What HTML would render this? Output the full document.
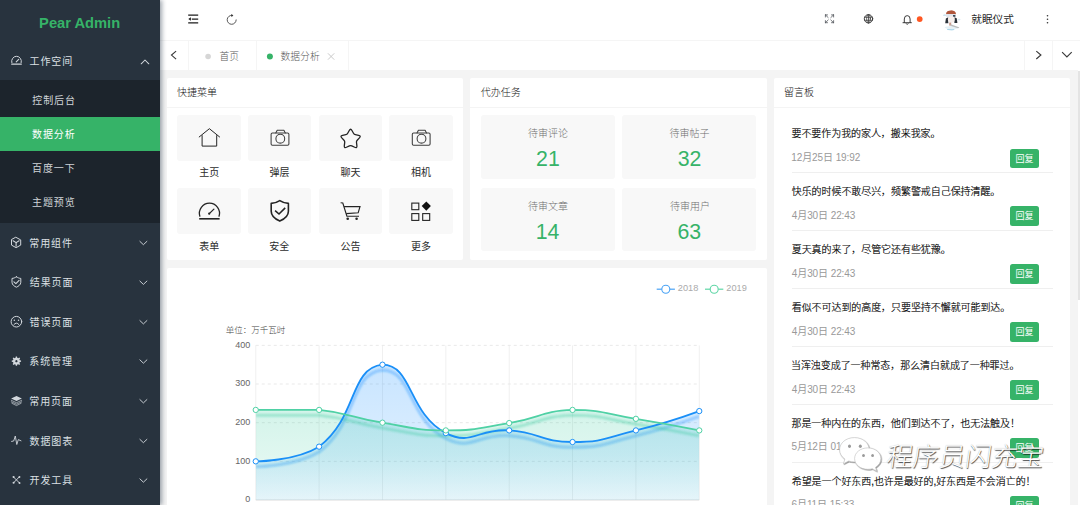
<!DOCTYPE html>
<html lang="zh-CN">
<head>
<meta charset="utf-8">
<title>Pear Admin</title>
<style>
*{box-sizing:border-box;margin:0;padding:0}
html,body{width:1080px;height:505px;overflow:hidden;background:#f4f4f4;font-family:"Liberation Sans","Noto Sans CJK SC",sans-serif;color:#333}
.t{position:absolute;white-space:nowrap;line-height:1}
.b{position:absolute}
.side{left:0;top:0;width:160px;height:505px;background:#28333e;box-shadow:1.5px 0 4.5px rgba(0,21,41,.38)}
.sub{left:0;top:80px;width:160px;height:143px;background:#1c242c}
.on{left:0;top:117px;width:160px;height:34px;background:#36b368}
.hdr{left:160px;top:0;width:920px;height:40px;background:#fff}
.tabs{left:160px;top:40px;width:920px;height:30px;background:#fff;border-top:1px solid #f5f5f5}
.vd{top:41px;width:1px;height:29px;background:#f5f5f5}
.card{background:#fff;border-radius:2px}
.cl{height:1px;background:#f4f4f4}
.qb{width:63.4px;height:46.3px;background:#f8f8f8;border-radius:3px}
.tk{width:134px;height:63px;background:#f8f8f8;border-radius:3px}
.btn{left:1010.3px;width:28.5px;height:19.65px;background:#36b368;border-radius:2.5px}
.ln{left:792px;width:260.7px;height:1px;background:#efefef}
svg{position:absolute;left:0;top:0;overflow:visible;pointer-events:none}
ul,li{list-style:none}
h3{font-weight:normal;font-size:inherit}
</style>
</head>
<body>
<header>
<div class="b hdr"></div>
<span class="t" style="left:971.20px;top:14.00px;font-size:10.7px;color:#2a2a2a;">就眠仪式</span>
<nav>
<div class="b tabs"></div>
<div class="b vd" style="left:188px"></div>
<div class="b vd" style="left:256px"></div>
<div class="b vd" style="left:348px"></div>
<div class="b vd" style="left:1024.2px"></div>
<div class="b vd" style="left:1051.8px"></div>
<span class="t" style="left:219.60px;top:52.30px;font-size:9.7px;color:#5a5a5a;font-weight:300;">首页</span>
<span class="t" style="left:280.50px;top:51.85px;font-size:9.8px;color:#5a5a5a;font-weight:300;">数据分析</span>
</nav>
<svg width="1080" height="505" viewBox="0 0 1080 505" fill="none" stroke-linecap="round" stroke-linejoin="round">
<g stroke="#1c1c1c" stroke-width="1.25" stroke-linecap="butt">
<path d="M188.2,15.1 H198.2 M191.8,19 H198.2 M188.2,22.9 H198.2"/>
</g>
<path d="M190.9,17.2 L188.3,19 L190.9,20.8 Z" fill="#1c1c1c" stroke="none"/>
<path d="M236.2,19.9 A4.5,4.5 0 1 1 232,15.3" stroke="#444" stroke-width=".9"/>
<path d="M231.2,13.9 L233.4,15.4 L231.4,16.9 Z" fill="#333" stroke="none"/>
<g stroke="#3a3a3a" stroke-width="1.15" stroke-linecap="butt" stroke-linejoin="miter"><path d="M176.1,51.1 L171.5,55.1 L176.1,59.1"/><path d="M1036.3,51.1 L1040.9,55.05 L1036.3,59"/><path d="M1062.1,52.2 L1066.9,57 L1071.7,52.2"/></g>
<circle cx="208.1" cy="56.5" r="2.8" fill="#d6d6d6" stroke="none"/><circle cx="269.9" cy="56.4" r="3" fill="#36b368" stroke="none"/>
<path d="M328.2,53.6 L334,59.4 M334,53.6 L328.2,59.4" stroke="#c4c4c4" stroke-width=".9"/>
<g stroke="#5c6066" stroke-width=".85">
<path d="M828.2,17.6 L825.4,14.9 M825.4,14.9 H827.5 M825.4,14.9 V17.0"/>
<path d="M830.8,17.6 L833.6,14.9 M833.6,14.9 H831.5 M833.6,14.9 V17.0"/>
<path d="M828.2,20.0 L825.4,22.7 M825.4,22.7 H827.5 M825.4,22.7 V20.6"/>
<path d="M830.8,20.0 L833.6,22.7 M833.6,22.7 H831.5 M833.6,22.7 V20.6"/>
</g>
<g stroke="#3c3c3c" stroke-width=".8"><circle cx="868.5" cy="18.8" r="4.2" stroke-width="1"/><ellipse cx="868.5" cy="18.8" rx="1.9" ry="4.2"/><path d="M864.6,17.3 H872.4 M864.6,20.3 H872.4 M868.5,14.7 V22.9"/></g>
<path d="M903,22.7 H911.4 M904.3,22.6 V19 A2.9,3.4 0 0 1 910.1,19 V22.6" stroke="#333" stroke-width=".95"/>
<path d="M906.2,23.7 A1.1,1.1 0 0 0 908.2,23.7" stroke="#333" stroke-width=".9"/>
<circle cx="919.7" cy="19.1" r="2.9" fill="#ff5722" stroke="none"/>
<g fill="#333" stroke="none"><circle cx="1047.5" cy="15.8" r=".8"/><circle cx="1047.5" cy="19.2" r=".8"/><circle cx="1047.5" cy="22.7" r=".8"/></g>
<defs><clipPath id="av"><circle cx="951.8" cy="20.4" r="10.4"/></clipPath><filter id="avb" x="-20%" y="-20%" width="140%" height="140%"><feGaussianBlur stdDeviation=".35"/></filter></defs>
<g clip-path="url(#av)" stroke="none" filter="url(#avb)">
<ellipse cx="950.6" cy="29.4" rx="3.8" ry="1" fill="#a9d5e9"/>
<ellipse cx="952" cy="27.6" rx="7.5" ry="1.6" fill="#e6f1f6"/>
<ellipse cx="944.6" cy="15.2" rx="1.6" ry=".9" fill="#cfe6f1"/>
<ellipse cx="959" cy="19.6" rx="1.5" ry=".8" fill="#d5e9f3"/>
<path d="M945.2,23.2 L945.9,18.4 L948.3,17.2 L948.3,23.2 Z" fill="#2c3038"/>
<path d="M957.4,23 L956.7,18.2 L954.4,17.2 L954.4,23 Z" fill="#2c3038"/>
<path d="M946,14.2 A5,4 0 0 1 956,14.2 Z" fill="#b0563a"/>
<rect x="946" y="14.1" width="9.6" height="2.9" rx="1.2" fill="#dfe5ec"/>
<rect x="953" y="15" width="2.4" height="1.8" fill="#3a4654"/>
<ellipse cx="951.3" cy="19.6" rx="3.4" ry="3.3" fill="#f7efec"/>
<rect x="949.2" y="22.6" width="2" height="3" fill="#c99a8a"/>
<path d="M950.8,24.2 L959.4,27.4 L958.8,28.4 L950.4,25.8 Z" fill="#bdbdbd"/>
</g>
</svg>
</header>
<main>
<section>
<div class="b card" style="left:167px;top:78px;width:296px;height:182px"></div>
<div class="b cl" style="left:167px;top:107px;width:296px"></div>
<h3><span class="t" style="left:177.00px;top:87.70px;font-size:10px;color:#151515;font-weight:300;">快捷菜单</span></h3>
<div class="b qb" style="left:177.4px;top:115px"></div><span class="t" style="left:199.25px;top:168.05px;font-size:10px;color:#2c2c2c;">主页</span>
<div class="b qb" style="left:248.1px;top:115px"></div><span class="t" style="left:269.60px;top:168.05px;font-size:10px;color:#2c2c2c;">弹层</span>
<div class="b qb" style="left:318.7px;top:115px"></div><span class="t" style="left:340.40px;top:168.05px;font-size:10px;color:#2c2c2c;">聊天</span>
<div class="b qb" style="left:389.2px;top:115px"></div><span class="t" style="left:410.90px;top:168.05px;font-size:10px;color:#2c2c2c;">相机</span>
<div class="b qb" style="left:177.4px;top:188px"></div><span class="t" style="left:199.25px;top:242.00px;font-size:10px;color:#2c2c2c;">表单</span>
<div class="b qb" style="left:248.1px;top:188px"></div><span class="t" style="left:269.35px;top:242.00px;font-size:10px;color:#2c2c2c;">安全</span>
<div class="b qb" style="left:318.7px;top:188px"></div><span class="t" style="left:340.40px;top:242.00px;font-size:10px;color:#2c2c2c;">公告</span>
<div class="b qb" style="left:389.2px;top:188px"></div><span class="t" style="left:410.90px;top:242.00px;font-size:10px;color:#2c2c2c;">更多</span>
<svg width="1080" height="505" viewBox="0 0 1080 505" fill="none" stroke-linecap="round" stroke-linejoin="round">
<g stroke="#242424" stroke-width="1" stroke-linecap="butt" stroke-linejoin="miter">
<path d="M198.9,137.2 L209.4,128.7 L219.9,137.2"/><path d="M202.1,135.2 V146.1 H216.7 V135.2"/>
</g>
<g stroke="#3c3c3c" stroke-width="1.05" transform="translate(0,0)"><rect x="271.1" y="132.9" width="17.8" height="12.4" rx="1.3"/><path d="M275.8,132.9 L277.2,130.2 H283.9 L285.3,132.9"/><circle cx="280.3" cy="138.7" r="4.4"/></g>
<g stroke="#3c3c3c" stroke-width="1.05" transform="translate(141.2,0)"><rect x="271.1" y="132.9" width="17.8" height="12.4" rx="1.3"/><path d="M275.8,132.9 L277.2,130.2 H283.9 L285.3,132.9"/><circle cx="280.3" cy="138.7" r="4.4"/></g>
<path d="M349.26,130.46 Q350.60,128.00 351.94,130.46 L353.50,133.31 Q354.13,134.45 355.40,134.69 L358.60,135.29 Q361.35,135.81 359.43,137.85 L357.20,140.21 Q356.31,141.15 356.47,142.44 L356.89,145.66 Q357.24,148.44 354.71,147.24 L351.78,145.86 Q350.60,145.30 349.42,145.86 L346.49,147.24 Q343.96,148.44 344.31,145.66 L344.73,142.44 Q344.89,141.15 344.00,140.21 L341.77,137.85 Q339.85,135.81 342.60,135.29 L345.80,134.69 Q347.07,134.45 347.70,133.31 Z" stroke="#242424" stroke-width="1.3" stroke-linejoin="round"/>
<g stroke="#242424"><path d="M199.85,216.2 A10.05,10.05 0 1 1 219.05,216.2" stroke-width="1.3"/><path d="M199.2,218.8 H219.6" stroke-width="1.6" stroke-linecap="butt"/><path d="M209.3,213.6 L213.9,209.1" stroke-width="1.3"/></g><circle cx="209.2" cy="213.7" r="1.1" fill="#242424" stroke="none"/>
<path d="M279.8,200.60000000000002 C276.8,202.5 273.8,203.4 271.2,203.4 V211.3 C271.2,216.3 275.8,219.4 279.8,221.10000000000002 C283.8,219.4 288.40000000000003,216.3 288.40000000000003,211.3 V203.4 C285.8,203.4 282.8,202.5 279.8,200.60000000000002 Z" stroke="#242424" stroke-width="1.6"/>
<path d="M275.1,210.6 L279,214 L285.2,207.9" stroke="#242424" stroke-width="1.55" stroke-linecap="butt" stroke-linejoin="miter"/>
<g stroke="#242424" stroke-width="1.15" stroke-linecap="butt" stroke-linejoin="miter"><path d="M340.6,202.7 L342.8,203 L346.9,216.2 H359"/><path d="M344.1,206.6 H360 L358.2,212.7 L346.2,213.6"/></g>
<circle cx="347.7" cy="218.8" r="1.3" fill="#242424" stroke="none"/><circle cx="356.6" cy="218.8" r="1.3" fill="#242424" stroke="none"/>
<g stroke="#242424" stroke-width="1.1" stroke-linejoin="miter"><rect x="411.8" y="203.1" width="7" height="6.6"/><rect x="411.8" y="213.6" width="7" height="6.8"/><rect x="422.7" y="213.6" width="7" height="6.8"/></g>
<path d="M426.3,201.5 L430.9,206.1 L426.3,210.7 L421.7,206.1 Z" fill="#111" stroke="none"/>
</svg>
</section>
<section>
<div class="b card" style="left:470px;top:78px;width:297px;height:182px"></div>
<div class="b cl" style="left:470px;top:107px;width:297px"></div>
<h3><span class="t" style="left:480.75px;top:87.70px;font-size:10px;color:#151515;font-weight:300;">代办任务</span></h3>
<div class="b tk" style="left:481px;top:115px;height:63.5px;"></div><span class="t" style="left:528.00px;top:129.15px;font-size:10px;color:#6f6f6f;font-weight:300;">待审评论</span><span class="t" style="left:536.12px;top:149.00px;font-size:21.3px;color:#36b368;">21</span>
<div class="b tk" style="left:622.4px;top:115px;height:63.5px;"></div><span class="t" style="left:669.40px;top:129.15px;font-size:10px;color:#6f6f6f;font-weight:300;">待审帖子</span><span class="t" style="left:677.65px;top:149.00px;font-size:21.3px;color:#36b368;">32</span>
<div class="b tk" style="left:481px;top:188px;height:62.6px;"></div><span class="t" style="left:528.00px;top:201.75px;font-size:10px;color:#6f6f6f;font-weight:300;">待审文章</span><span class="t" style="left:535.75px;top:221.60px;font-size:21.3px;color:#36b368;">14</span>
<div class="b tk" style="left:622.4px;top:188px;height:62.6px;"></div><span class="t" style="left:669.90px;top:201.75px;font-size:10px;color:#6f6f6f;font-weight:300;">待审用户</span><span class="t" style="left:677.52px;top:221.60px;font-size:21.3px;color:#36b368;">63</span>
</section>
<section>
<div class="b card" style="left:774px;top:78px;width:296px;height:440px"></div>
<div class="b cl" style="left:774px;top:107px;width:296px"></div>
<h3><span class="t" style="left:784.00px;top:87.70px;font-size:10px;color:#151515;font-weight:300;">留言板</span></h3>
<ul>
<li><span class="t" style="left:791.50px;top:129.00px;font-size:10px;color:#000;font-weight:300;-webkit-text-stroke:.18px #000;letter-spacing:-.07px;">要不要作为我的家人，搬来我家。</span><span class="t" style="left:791.25px;top:152.80px;font-size:10px;color:#999;letter-spacing:-.09px;">12月25日 19:92</span><div class="b btn" style="top:148.55px"></div><span class="t" style="left:1015.58px;top:154.50px;font-size:9px;color:#fff;">回复</span><div class="b ln" style="top:171.90px"></div></li>
<li><span class="t" style="left:791.75px;top:186.93px;font-size:10px;color:#000;font-weight:300;-webkit-text-stroke:.18px #000;letter-spacing:-.07px;">快乐的时候不敢尽兴，频繁警戒自己保持清醒。</span><span class="t" style="left:791.75px;top:210.73px;font-size:10px;color:#999;letter-spacing:-.09px;">4月30日 22:43</span><div class="b btn" style="top:206.48px"></div><span class="t" style="left:1015.58px;top:212.43px;font-size:9px;color:#fff;">回复</span><div class="b ln" style="top:229.83px"></div></li>
<li><span class="t" style="left:791.75px;top:244.86px;font-size:10px;color:#000;font-weight:300;-webkit-text-stroke:.18px #000;letter-spacing:-.07px;">夏天真的来了，尽管它还有些犹豫。</span><span class="t" style="left:791.75px;top:268.66px;font-size:10px;color:#999;letter-spacing:-.09px;">4月30日 22:43</span><div class="b btn" style="top:264.41px"></div><span class="t" style="left:1015.58px;top:270.36px;font-size:9px;color:#fff;">回复</span><div class="b ln" style="top:287.76px"></div></li>
<li><span class="t" style="left:791.75px;top:302.79px;font-size:10px;color:#000;font-weight:300;-webkit-text-stroke:.18px #000;letter-spacing:-.07px;">看似不可达到的高度，只要坚持不懈就可能到达。</span><span class="t" style="left:791.75px;top:326.59px;font-size:10px;color:#999;letter-spacing:-.09px;">4月30日 22:43</span><div class="b btn" style="top:322.34px"></div><span class="t" style="left:1015.58px;top:328.29px;font-size:9px;color:#fff;">回复</span><div class="b ln" style="top:345.69px"></div></li>
<li><span class="t" style="left:791.00px;top:360.72px;font-size:10px;color:#000;font-weight:300;-webkit-text-stroke:.18px #000;letter-spacing:-.07px;">当浑浊变成了一种常态，那么清白就成了一种罪过。</span><span class="t" style="left:791.75px;top:384.52px;font-size:10px;color:#999;letter-spacing:-.09px;">4月30日 22:43</span><div class="b btn" style="top:380.27px"></div><span class="t" style="left:1015.58px;top:386.22px;font-size:9px;color:#fff;">回复</span><div class="b ln" style="top:403.62px"></div></li>
<li><span class="t" style="left:791.50px;top:418.65px;font-size:10px;color:#000;font-weight:300;-webkit-text-stroke:.18px #000;letter-spacing:-.07px;">那是一种内在的东西，他们到达不了，也无法触及！</span><span class="t" style="left:791.50px;top:442.45px;font-size:10px;color:#999;letter-spacing:-.09px;">5月12日 01:25</span><div class="b btn" style="top:438.20px"></div><span class="t" style="left:1015.58px;top:444.15px;font-size:9px;color:#fff;">回复</span><div class="b ln" style="top:461.55px"></div></li>
<li><span class="t" style="left:791.75px;top:476.58px;font-size:10px;color:#000;font-weight:300;-webkit-text-stroke:.18px #000;letter-spacing:-.07px;">希望是一个好东西,也许是最好的,好东西是不会消亡的！</span><span class="t" style="left:791.50px;top:500.38px;font-size:10px;color:#999;letter-spacing:-.09px;">6月11日 15:33</span><div class="b btn" style="top:496.13px"></div><span class="t" style="left:1015.58px;top:502.08px;font-size:9px;color:#fff;">回复</span></li>
</ul>
</section>
<section>
<div class="b card" style="left:167px;top:268px;width:600px;height:250px"></div>
<svg width="1080" height="505" viewBox="0 0 1080 505">
<defs><linearGradient id="gb" gradientUnits="userSpaceOnUse" x1="0" y1="364" x2="0" y2="500"><stop offset="0" stop-color="#1890ff" stop-opacity=".24"/><stop offset=".67" stop-color="#1890ff" stop-opacity=".15"/><stop offset="1" stop-color="#1890ff" stop-opacity=".07"/></linearGradient><linearGradient id="gg" gradientUnits="userSpaceOnUse" x1="0" y1="410" x2="0" y2="500"><stop offset="0" stop-color="#2fc99a" stop-opacity=".21"/><stop offset=".5" stop-color="#2fc99a" stop-opacity=".15"/><stop offset="1" stop-color="#2fc99a" stop-opacity=".05"/></linearGradient><filter id="sb" x="-5%" y="-40%" width="110%" height="200%"><feGaussianBlur stdDeviation="1.1"/></filter><clipPath id="cc"><rect x="255.75" y="330" width="443.52" height="170.0"/></clipPath></defs>
<line x1="255.75" y1="345.36" x2="255.75" y2="500.00" stroke="#f0f0f0" stroke-width="1"/>
<line x1="319.11" y1="345.36" x2="319.11" y2="500.00" stroke="#f0f0f0" stroke-width="1"/>
<line x1="382.47" y1="345.36" x2="382.47" y2="500.00" stroke="#f0f0f0" stroke-width="1"/>
<line x1="445.83" y1="345.36" x2="445.83" y2="500.00" stroke="#f0f0f0" stroke-width="1"/>
<line x1="509.19" y1="345.36" x2="509.19" y2="500.00" stroke="#f0f0f0" stroke-width="1"/>
<line x1="572.55" y1="345.36" x2="572.55" y2="500.00" stroke="#f0f0f0" stroke-width="1"/>
<line x1="635.91" y1="345.36" x2="635.91" y2="500.00" stroke="#f0f0f0" stroke-width="1"/>
<line x1="699.27" y1="345.36" x2="699.27" y2="500.00" stroke="#f0f0f0" stroke-width="1"/>
<line x1="255.75" y1="461.34" x2="699.27" y2="461.34" stroke="#e9e9e9" stroke-width="1" stroke-dasharray="3 3"/>
<line x1="255.75" y1="422.68" x2="699.27" y2="422.68" stroke="#e9e9e9" stroke-width="1" stroke-dasharray="3 3"/>
<line x1="255.75" y1="384.02" x2="699.27" y2="384.02" stroke="#e9e9e9" stroke-width="1" stroke-dasharray="3 3"/>
<line x1="255.75" y1="345.36" x2="699.27" y2="345.36" stroke="#e9e9e9" stroke-width="1" stroke-dasharray="3 3"/>
<line x1="255.75" y1="500.00" x2="699.27" y2="500.00" stroke="#dcdcdc" stroke-width="1"/>
<g clip-path="url(#cc)">
<path d="M255.75,461.34 C255.75,461.34 294.67,461.34 319.11,446.65 C358.03,416.96 349.13,368.25 382.47,364.69 C412.49,364.69 408.12,413.56 445.83,433.12 C471.48,446.42 477.76,428.21 509.19,430.41 C541.12,432.65 540.87,442.01 572.55,442.01 C604.23,442.01 604.67,438.04 635.91,430.41 C668.03,422.57 699.27,411.08 699.27,411.08 L699.27,510.00 L255.75,510.00 Z" fill="url(#gb)"/>
<path d="M255.75,461.34 C255.75,461.34 294.67,461.34 319.11,446.65 C358.03,416.96 349.13,368.25 382.47,364.69 C412.49,364.69 408.12,413.56 445.83,433.12 C471.48,446.42 477.76,428.21 509.19,430.41 C541.12,432.65 540.87,442.01 572.55,442.01 C604.23,442.01 604.67,438.04 635.91,430.41 C668.03,422.57 699.27,411.08 699.27,411.08" transform="translate(0,5.3)" fill="none" stroke="#1890ff" stroke-opacity=".42" stroke-width="2.6" filter="url(#sb)"/>
<path d="M255.75,409.92 C255.75,409.92 287.74,409.92 319.11,409.92 C351.10,413.14 350.59,417.53 382.47,422.68 C413.95,427.77 414.14,430.32 445.83,430.41 C477.50,430.41 477.74,428.15 509.19,423.07 C541.10,417.91 540.69,410.99 572.55,409.92 C604.05,409.92 604.34,413.71 635.91,418.81 C667.70,423.95 699.27,430.41 699.27,430.41 L699.27,510.00 L255.75,510.00 Z" fill="url(#gg)"/>
<path d="M255.75,409.92 C255.75,409.92 287.74,409.92 319.11,409.92 C351.10,413.14 350.59,417.53 382.47,422.68 C413.95,427.77 414.14,430.32 445.83,430.41 C477.50,430.41 477.74,428.15 509.19,423.07 C541.10,417.91 540.69,410.99 572.55,409.92 C604.05,409.92 604.34,413.71 635.91,418.81 C667.70,423.95 699.27,430.41 699.27,430.41" transform="translate(0,5.3)" fill="none" stroke="#2fc99a" stroke-opacity=".4" stroke-width="2.6" filter="url(#sb)"/>
</g>
<path d="M255.75,461.34 C255.75,461.34 294.67,461.34 319.11,446.65 C358.03,416.96 349.13,368.25 382.47,364.69 C412.49,364.69 408.12,413.56 445.83,433.12 C471.48,446.42 477.76,428.21 509.19,430.41 C541.12,432.65 540.87,442.01 572.55,442.01 C604.23,442.01 604.67,438.04 635.91,430.41 C668.03,422.57 699.27,411.08 699.27,411.08" fill="none" stroke="#1a8ff7" stroke-width="1.8"/>
<path d="M255.75,409.92 C255.75,409.92 287.74,409.92 319.11,409.92 C351.10,413.14 350.59,417.53 382.47,422.68 C413.95,427.77 414.14,430.32 445.83,430.41 C477.50,430.41 477.74,428.15 509.19,423.07 C541.10,417.91 540.69,410.99 572.55,409.92 C604.05,409.92 604.34,413.71 635.91,418.81 C667.70,423.95 699.27,430.41 699.27,430.41" fill="none" stroke="#4fd1a5" stroke-width="1.8"/>
<circle cx="255.75" cy="461.34" r="2.65" fill="#fff" stroke="#1a8ff7" stroke-width="1"/>
<circle cx="319.11" cy="446.65" r="2.65" fill="#fff" stroke="#1a8ff7" stroke-width="1"/>
<circle cx="382.47" cy="364.69" r="2.65" fill="#fff" stroke="#1a8ff7" stroke-width="1"/>
<circle cx="445.83" cy="433.12" r="2.65" fill="#fff" stroke="#1a8ff7" stroke-width="1"/>
<circle cx="509.19" cy="430.41" r="2.65" fill="#fff" stroke="#1a8ff7" stroke-width="1"/>
<circle cx="572.55" cy="442.01" r="2.65" fill="#fff" stroke="#1a8ff7" stroke-width="1"/>
<circle cx="635.91" cy="430.41" r="2.65" fill="#fff" stroke="#1a8ff7" stroke-width="1"/>
<circle cx="699.27" cy="411.08" r="2.65" fill="#fff" stroke="#1a8ff7" stroke-width="1"/>
<circle cx="255.75" cy="409.92" r="2.65" fill="#fff" stroke="#4fd1a5" stroke-width="1"/>
<circle cx="319.11" cy="409.92" r="2.65" fill="#fff" stroke="#4fd1a5" stroke-width="1"/>
<circle cx="382.47" cy="422.68" r="2.65" fill="#fff" stroke="#4fd1a5" stroke-width="1"/>
<circle cx="445.83" cy="430.41" r="2.65" fill="#fff" stroke="#4fd1a5" stroke-width="1"/>
<circle cx="509.19" cy="423.07" r="2.65" fill="#fff" stroke="#4fd1a5" stroke-width="1"/>
<circle cx="572.55" cy="409.92" r="2.65" fill="#fff" stroke="#4fd1a5" stroke-width="1"/>
<circle cx="635.91" cy="418.81" r="2.65" fill="#fff" stroke="#4fd1a5" stroke-width="1"/>
<circle cx="699.27" cy="430.41" r="2.65" fill="#fff" stroke="#4fd1a5" stroke-width="1"/>
<line x1="656.7" y1="289.2" x2="674.9" y2="289.2" stroke="#4aa3f5" stroke-width="1.2"/><circle cx="665.8" cy="289.2" r="4" fill="#fff" stroke="#4aa3f5" stroke-width="1.1"/>
<line x1="705" y1="289.2" x2="723.3" y2="289.2" stroke="#5fd6a6" stroke-width="1.2"/><circle cx="714.2" cy="289.2" r="4" fill="#fff" stroke="#5fd6a6" stroke-width="1.1"/>
</svg>
<span class="t" style="left:225.80px;top:326.00px;font-size:8.5px;color:#444;font-weight:300;">单位：万千瓦时</span>
<span class="t" style="left:245.25px;top:495.45px;font-size:9px;color:#666;">0</span>
<span class="t" style="left:235.25px;top:456.79px;font-size:9px;color:#666;">100</span>
<span class="t" style="left:235.25px;top:418.13px;font-size:9px;color:#666;">200</span>
<span class="t" style="left:235.25px;top:379.47px;font-size:9px;color:#666;">300</span>
<span class="t" style="left:235.25px;top:340.81px;font-size:9px;color:#666;">400</span>
<span class="t" style="left:677.80px;top:283.90px;font-size:9.2px;color:#aaa;">2018</span>
<span class="t" style="left:726.30px;top:283.90px;font-size:9.2px;color:#aaa;">2019</span>
</section>
<div class="wm">
<svg width="1080" height="505" viewBox="0 0 1080 505"><defs><filter id="ws" x="-20%" y="-20%" width="140%" height="140%"><feDropShadow dx=".7" dy=".8" stdDeviation=".5" flood-color="#000" flood-opacity=".55"/></filter></defs><g filter="url(#ws)" fill="#fff" stroke="#b0b0b0" stroke-width=".5"><path d="M854.4,437.6 C846,437.6 839.6,443 839.6,449.8 C839.6,453.6 841.7,456.9 844.9,459.1 L843.4,463.8 L848.7,461 C850.5,461.6 852.4,461.9 854.4,461.9 C862.8,461.9 869.2,456.6 869.2,449.8 C869.2,443 862.8,437.6 854.4,437.6 Z"/><path d="M867.8,447.9 C860.4,447.9 854.6,452.6 854.6,458.6 C854.6,464.6 860.4,469.3 867.8,469.3 C869.4,469.3 870.9,469.1 872.3,468.7 L876.6,471.2 L875.5,467.3 C878.8,465.3 880.9,462.2 880.9,458.6 C880.9,452.6 875.2,447.9 867.8,447.9 Z"/></g><g fill="#9a9a9a"><ellipse cx="849.5" cy="446.3" rx="1.5" ry="1.7"/><ellipse cx="860.3" cy="446.3" rx="1.5" ry="1.7"/><ellipse cx="863.5" cy="455.6" rx="1.4" ry="1.5"/><ellipse cx="872.6" cy="455.6" rx="1.4" ry="1.5"/></g></svg>
<span class="t" style="left:885px;top:443.8px;font-size:26.2px;font-weight:300;color:#fff;transform:skewX(-8deg);transform-origin:0 100%;text-shadow:.8px .9px .8px rgba(0,0,0,.68),0 0 1px rgba(0,0,0,.28)">程序员闪充宝</span>
</div>
</main>
<div class="b" style="left:1077.7px;top:70px;width:2.3px;height:435px;background:#fff"></div>
<div class="b" style="left:1077.7px;top:70.7px;width:2.3px;height:229.6px;background:#e4e4e4"></div>
<aside>
<div class="b side"></div>
<span class="t" style="left:39.10px;top:16.15px;font-size:14.7px;font-weight:bold;color:#36b368;">Pear Admin</span>
<ul>
<li><span class="t" style="left:29.50px;top:56.50px;font-size:10px;letter-spacing:.92px;color:#dce0e4;">工作空间</span><div class="b sub"></div><div class="b on"></div><ul><li><span class="t" style="left:32.25px;top:96.10px;font-size:10px;letter-spacing:.92px;color:#d0d4d8;">控制后台</span></li><li><span class="t" style="left:32.00px;top:129.90px;font-size:10px;letter-spacing:.92px;color:#fff;">数据分析</span></li><li><span class="t" style="left:32.00px;top:163.50px;font-size:10px;letter-spacing:.92px;color:#d0d4d8;">百度一下</span></li><li><span class="t" style="left:32.00px;top:198.00px;font-size:10px;letter-spacing:.92px;color:#d0d4d8;">主题预览</span></li></ul></li>
<li><span class="t" style="left:29.25px;top:238.50px;font-size:10px;letter-spacing:.92px;color:#dce0e4;">常用组件</span></li>
<li><span class="t" style="left:29.75px;top:277.50px;font-size:10px;letter-spacing:.92px;color:#dce0e4;">结果页面</span></li>
<li><span class="t" style="left:29.50px;top:317.50px;font-size:10px;letter-spacing:.92px;color:#dce0e4;">错误页面</span></li>
<li><span class="t" style="left:29.25px;top:357.00px;font-size:10px;letter-spacing:.92px;color:#dce0e4;">系统管理</span></li>
<li><span class="t" style="left:29.25px;top:396.50px;font-size:10px;letter-spacing:.92px;color:#dce0e4;">常用页面</span></li>
<li><span class="t" style="left:29.50px;top:437.30px;font-size:10px;letter-spacing:.92px;color:#dce0e4;">数据图表</span></li>
<li><span class="t" style="left:29.50px;top:475.90px;font-size:10px;letter-spacing:.92px;color:#dce0e4;">开发工具</span></li>
</ul>
<svg width="1080" height="505" viewBox="0 0 1080 505" fill="none" stroke-linecap="round" stroke-linejoin="round">
<g stroke="#d2d7dc" stroke-width="1">
<path d="M11.8,62.6 A4.9,4.9 0 1 1 21.2,62.6"/><path d="M11.6,64.1 H21.4" stroke-width="1.1"/><path d="M16.2,61.9 L18.7,59.3" stroke-width="1.1"/>
<path d="M16.1,237.4 L20.7,239.9 L20.7,245.1 L16.1,247.7 L11.5,245.1 L11.5,239.9 Z"/>
<path d="M13.1,240.8 L16.1,242.6 L19.1,240.8 M16.1,242.6 V246.2" stroke-width="1.1"/>
<path d="M16.4,276.8 C14.899999999999999,277.8 13.399999999999999,278.4 11.999999999999998,278.4 V282.3 C11.999999999999998,284.8 14.399999999999999,286.3 16.4,287.2 C18.4,286.3 20.799999999999997,284.8 20.799999999999997,282.3 V278.4 C19.4,278.4 17.9,277.8 16.4,276.8 Z"/>
<path d="M13.9,281.9 L15.9,283.6 L19.1,280.4" stroke-width="1.1"/>
<circle cx="16.4" cy="321.7" r="5.3"/><path d="M13.9,324.6 Q16.4,321.4 18.9,324.6"/>
<circle cx="14.3" cy="320.3" r=".75" fill="#d2d7dc" stroke="none"/><circle cx="18.5" cy="320.3" r=".75" fill="#d2d7dc" stroke="none"/>
<path d="M11.6,441.4 L13.7,441 L15.3,436 L16.8,444.5 L18.3,439.6 L21,440.8" stroke-width=".9"/>
</g>
<path d="M19.80,360.37 L21.06,360.59 L21.06,361.81 L19.80,362.03 L19.39,363.02 L20.13,364.06 L19.26,364.93 L18.22,364.19 L17.23,364.60 L17.01,365.86 L15.79,365.86 L15.57,364.60 L14.58,364.19 L13.54,364.93 L12.67,364.06 L13.41,363.02 L13.00,362.03 L11.74,361.81 L11.74,360.59 L13.00,360.37 L13.41,359.38 L12.67,358.34 L13.54,357.47 L14.58,358.21 L15.57,357.80 L15.79,356.54 L17.01,356.54 L17.23,357.80 L18.22,358.21 L19.26,357.47 L20.13,358.34 L19.39,359.38 Z M16.40,360.05 a1.15,1.15 0 1 0 .01,0 Z" fill="#d2d7dc" fill-rule="evenodd" stroke="none"/>
<path d="M16.5,395.9 L21.9,398.5 L16.5,401.1 L11.1,398.5 Z" fill="#d2d7dc" stroke="none"/>
<g stroke="#d2d7dc" stroke-width=".75" stroke-opacity=".85"><path d="M11.3,400.3 L16.5,402.7 L21.7,400.3"/><path d="M11.3,401.8 L16.5,404.2 L21.7,401.8"/><path d="M11.9,403.3 L16.5,405.6 L21.1,403.3"/></g>
<g stroke="#d2d7dc" stroke-width=".95"><path d="M13.6,477.1 L19.4,482.9"/><path d="M19.2,477 L13.8,482.6"/></g>
<g fill="#d2d7dc" stroke="none"><circle cx="13.6" cy="477" r="1.05"/><circle cx="19.5" cy="483" r=".95"/><circle cx="19.4" cy="477" r=".95"/><circle cx="13.6" cy="482.8" r="1.05"/></g>
<path d="M141.2,63.8 L145,60 L148.8,63.8" stroke="#d2d7dc" stroke-width="1.05"/>
<g stroke="#ced3d8" stroke-width=".95" stroke-linecap="butt">
<path d="M139.6,241.1 L143.4,244.7 L147.2,241.1"/>
<path d="M139.6,280.8 L143.4,284.4 L147.2,280.8"/>
<path d="M139.6,320.3 L143.4,323.9 L147.2,320.3"/>
<path d="M139.6,359.6 L143.4,363.2 L147.2,359.6"/>
<path d="M139.6,399.3 L143.4,402.9 L147.2,399.3"/>
<path d="M139.6,439.1 L143.4,442.7 L147.2,439.1"/>
<path d="M139.6,478.6 L143.4,482.2 L147.2,478.6"/>
</g>
</svg>
</aside>
</body>
</html>
